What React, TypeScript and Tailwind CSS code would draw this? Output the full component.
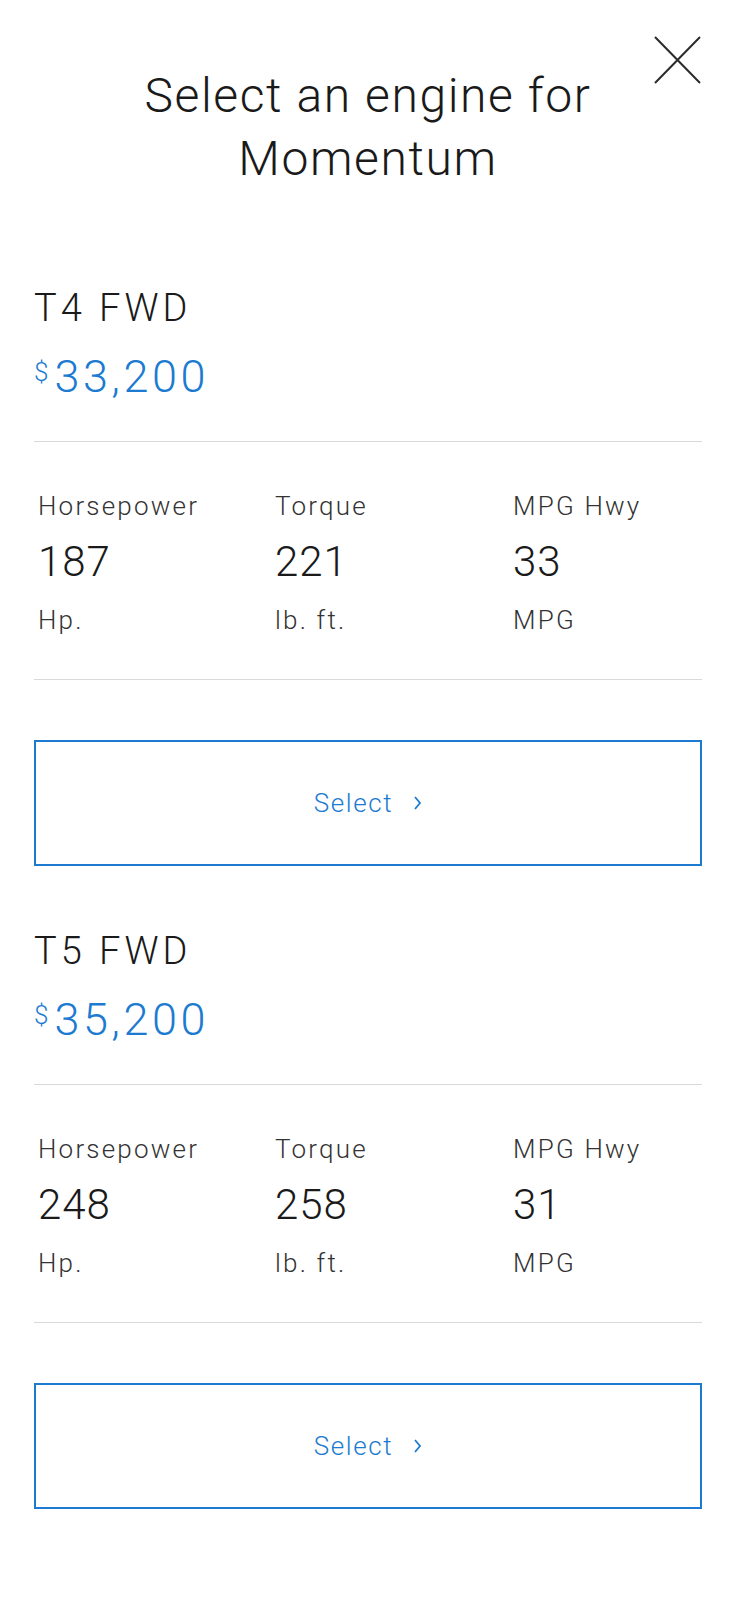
import React from 'react';

interface Engine {
  name: string;
  price: string;
  hp: string;
  torque: string;
  mpg: string;
}

const engines: Engine[] = [
  { name: 'T4 FWD', price: '33,200', hp: '187', torque: '221', mpg: '33' },
  { name: 'T5 FWD', price: '35,200', hp: '248', torque: '258', mpg: '31' },
];

function CloseIcon() {
  return (
    <svg width="47" height="48" viewBox="0 0 47 48" fill="none">
      <path d="M1 1 L46 47 M46 1 L1 47" stroke="#2b2b2b" strokeWidth="2" />
    </svg>
  );
}

function Chevron() {
  return (
    <svg width="9" height="16" viewBox="0 0 9 16" fill="none">
      <path d="M2 2 L7 8 L2 14" stroke="#1c7bd0" strokeWidth="1.8" />
    </svg>
  );
}

function Stat({ label, value, unit }: { label: string; value: string; unit: string }) {
  return (
    <div className="flex flex-col">
      <span className="text-[26px] leading-[32px] tracking-[2.2px] font-light text-[#333]">{label}</span>
      <span className="mt-[17px] text-[42px] leading-[46px] tracking-[1px] font-light text-[#1a1a1a]">{value}</span>
      <span className="mt-[19px] text-[26px] leading-[32px] tracking-[2.2px] font-light text-[#333]">{unit}</span>
    </div>
  );
}

function EngineCard({ engine }: { engine: Engine }) {
  return (
    <section className="flex flex-col">
      <h2 className="text-[38px] leading-[44px] tracking-[4px] text-[#1a1a1a] font-light">{engine.name}</h2>
      <div className="mt-[21px] flex items-start text-[#1c7bd0]">
        <span className="text-[26px] leading-[30px] mt-[6px] mr-[6px] font-light">$</span>
        <span className="text-[45px] leading-[52px] tracking-[3.5px] font-light">{engine.price}</span>
      </div>
      <div className="mt-[38px] border-t border-[#d9d9d9]" />
      <div className="mt-[48px] grid grid-cols-[237px_238px_1fr] pl-[4px]">
        <Stat label="Horsepower" value={engine.hp} unit="Hp." />
        <Stat label="Torque" value={engine.torque} unit="lb. ft." />
        <Stat label="MPG Hwy" value={engine.mpg} unit="MPG" />
      </div>
      <div className="mt-[43px] border-t border-[#d9d9d9]" />
      <button className="mt-[60px] h-[126px] w-full border-2 border-[#1c7bd0] flex items-center justify-center gap-[20px] text-[#1c7bd0] bg-white">
        <span className="text-[26px] leading-[32px] tracking-[1.6px] font-light">Select</span>
        <Chevron />
      </button>
    </section>
  );
}

export default function App() {
  return (
    <div className="bg-white" style={{ fontFamily: 'Roboto, "Liberation Sans", sans-serif' }}>
      <div className="ml-[34px] w-[668px] pb-[40px]">
        <header className="relative pt-[64px]">
          <button className="absolute top-[36px] right-[1px]" aria-label="Close">
            <CloseIcon />
          </button>
          <h1 className="text-center text-[48px] leading-[63px] tracking-[1.6px] font-light text-[#1a1a1a]">
            Select an engine for
            <br />
            Momentum
          </h1>
        </header>
        <div className="mt-[96px] flex flex-col gap-[63px]">
          {engines.map((e) => (
            <EngineCard key={e.name} engine={e} />
          ))}
        </div>
      </div>
    </div>
  );
}
